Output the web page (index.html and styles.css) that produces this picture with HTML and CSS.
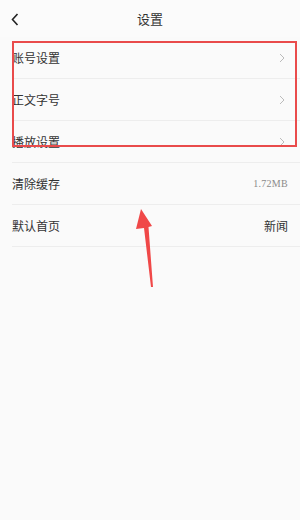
FILE: index.html
```html
<!DOCTYPE html>
<html lang="zh-CN">
<head>
  <meta charset="UTF-8" />
  <meta name="viewport" content="width=device-width, initial-scale=1.0" />
  <title>设置</title>
  <link rel="stylesheet" href="styles.css">
</head>
<body>
  <div class="page">
    <div class="header">
      <svg class="back" width="8" height="13" viewBox="0 0 8 13"><polyline points="6.5,1 1.5,6.5 6.5,12" fill="none" stroke="#222" stroke-width="1.6"/></svg>
      <div class="title">设置</div>
    </div>
    <div class="list">
      <div class="row">
        <span class="label">账号设置</span>
        <svg class="more" width="6" height="10" viewBox="0 0 6 10"><polyline points="1,1 5,5 1,9" fill="none" stroke="#bbb" stroke-width="1"/></svg>
      </div>
      <div class="row">
        <span class="label">正文字号</span>
        <svg class="more" width="6" height="10" viewBox="0 0 6 10"><polyline points="1,1 5,5 1,9" fill="none" stroke="#bbb" stroke-width="1"/></svg>
      </div>
      <div class="row">
        <span class="label">播放设置</span>
        <svg class="more" width="6" height="10" viewBox="0 0 6 10"><polyline points="1,1 5,5 1,9" fill="none" stroke="#bbb" stroke-width="1"/></svg>
      </div>
      <div class="row">
        <span class="label">清除缓存</span>
        <span class="size">1.72MB</span>
      </div>
      <div class="row">
        <span class="label">默认首页</span>
        <span class="value">新闻</span>
      </div>
    </div>

    <!-- annotation overlay -->
    <div class="mark-box"></div>
    <svg class="mark-arrow" width="300" height="520" viewBox="0 0 300 520">
      <polygon points="141,209 152,226 148.5,227 153,287 151,287 144,228 136,229" fill="#f04848"/>
    </svg>
  </div>
</body>
</html>
```

FILE: styles.css
```css
body {
  margin: 0;
  padding: 0;
  background-color: #fafafa;
  font-family: "Noto Sans CJK SC", "Noto Sans", sans-serif;
  color: #333;
}
.page {
  position: relative;
  width: 300px;
  height: 520px;
  overflow: hidden;
}
.header {
  height: 37px;
  display: flex;
  align-items: center;
  justify-content: center;
  position: relative;
  background: #fbfbfb;
}
.back {
  position: absolute;
  left: 11px;
  top: 13px;
}
.title {
  font-size: 13px;
  color: #333;
}
.list {
  padding-left: 12px;
}
.row {
  height: 41px;
  display: flex;
  align-items: center;
  justify-content: space-between;
  padding-right: 12px;
  border-bottom: 1px solid #ededed;
}
.label {
  font-size: 12px;
  color: #333;
}
.more {
  margin-right: 3px;
}
.size {
  font-family: "Liberation Serif", serif;
  font-size: 10px;
  color: #8a8a8a;
  letter-spacing: 0.3px;
}
.value {
  font-size: 12px;
  color: #333;
}
.mark-box {
  position: absolute;
  left: 12px;
  top: 41px;
  width: 281px;
  height: 102px;
  border: 2px solid #e94b4b;
}
.mark-arrow {
  position: absolute;
  left: 0;
  top: 0;
}
```
